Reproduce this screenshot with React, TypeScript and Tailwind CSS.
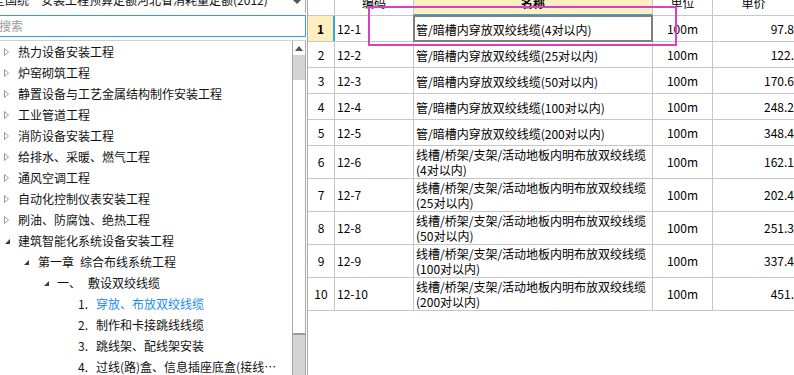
import React from 'react';

type TreeItem = { lvl: number; icon?: 'c' | 'e'; num?: string; text: string; sel?: boolean };

const tree: TreeItem[] = [
  { lvl: 0, icon: 'c', text: '热力设备安装工程' },
  { lvl: 0, icon: 'c', text: '炉窑砌筑工程' },
  { lvl: 0, icon: 'c', text: '静置设备与工艺金属结构制作安装工程' },
  { lvl: 0, icon: 'c', text: '工业管道工程' },
  { lvl: 0, icon: 'c', text: '消防设备安装工程' },
  { lvl: 0, icon: 'c', text: '给排水、采暖、燃气工程' },
  { lvl: 0, icon: 'c', text: '通风空调工程' },
  { lvl: 0, icon: 'c', text: '自动化控制仪表安装工程' },
  { lvl: 0, icon: 'c', text: '刷油、防腐蚀、绝热工程' },
  { lvl: 0, icon: 'e', text: '建筑智能化系统设备安装工程' },
  { lvl: 1, icon: 'e', num: '第一章', text: '综合布线系统工程' },
  { lvl: 2, icon: 'e', num: '一、', text: '敷设双绞线缆' },
  { lvl: 3, num: '1.', text: '穿放、布放双绞线缆', sel: true },
  { lvl: 3, num: '2.', text: '制作和卡接跳线线缆' },
  { lvl: 3, num: '3.', text: '跳线架、配线架安装' },
  { lvl: 3, num: '4.', text: '过线(路)盒、信息插座底盒(接线…' },
];

type Row = { n: number; code: string; name: string[]; price: string };

const rows: Row[] = [
  { n: 1, code: '12-1', name: ['管/暗槽内穿放双绞线缆(4对以内)'], price: '97.8' },
  { n: 2, code: '12-2', name: ['管/暗槽内穿放双绞线缆(25对以内)'], price: '122.' },
  { n: 3, code: '12-3', name: ['管/暗槽内穿放双绞线缆(50对以内)'], price: '170.6' },
  { n: 4, code: '12-4', name: ['管/暗槽内穿放双绞线缆(100对以内)'], price: '248.2' },
  { n: 5, code: '12-5', name: ['管/暗槽内穿放双绞线缆(200对以内)'], price: '348.4' },
  { n: 6, code: '12-6', name: ['线槽/桥架/支架/活动地板内明布放双绞线缆', '(4对以内)'], price: '162.1' },
  { n: 7, code: '12-7', name: ['线槽/桥架/支架/活动地板内明布放双绞线缆', '(25对以内)'], price: '202.4' },
  { n: 8, code: '12-8', name: ['线槽/桥架/支架/活动地板内明布放双绞线缆', '(50对以内)'], price: '251.3' },
  { n: 9, code: '12-9', name: ['线槽/桥架/支架/活动地板内明布放双绞线缆', '(100对以内)'], price: '337.4' },
  { n: 10, code: '12-10', name: ['线槽/桥架/支架/活动地板内明布放双绞线缆', '(200对以内)'], price: '451.' },
];

function Collapsed() {
  return (
    <svg width="5" height="8" viewBox="0 0 5 8">
      <path d="M0.5 0.5 L4.5 4 L0.5 7.5 Z" fill="none" stroke="#9a9a9a" strokeWidth="1" />
    </svg>
  );
}

function Expanded() {
  return (
    <svg width="5" height="5" viewBox="0 0 5 5">
      <path d="M5 0 L5 5 L0 5 Z" fill="#3a3a3a" />
    </svg>
  );
}

const lvlPad: Record<number, string> = {
  0: 'pl-[4px]',
  1: 'pl-[23px]',
  2: 'pl-[43px]',
  3: 'pl-[78px]',
};
const iconW: Record<number, string> = {
  0: 'w-[14px]',
  1: 'w-[15px]',
  2: 'w-[14px]',
  3: 'w-0',
};

function TreeRow({ item }: { item: TreeItem }) {
  return (
    <div className={`flex h-[21px] shrink-0 items-center whitespace-nowrap leading-[21px] ${lvlPad[item.lvl]}`}>
      {item.lvl < 3 && (
        <div className={`flex items-center ${iconW[item.lvl]} ${item.icon === 'e' ? 'pl-px pt-[1px]' : ''}`}>
          {item.icon === 'c' ? <Collapsed /> : <Expanded />}
        </div>
      )}
      {item.num && item.lvl === 3 && <span className="w-[18px] text-[#111]">{item.num}</span>}
      {item.num && item.lvl === 1 && <span className="mr-[6px] text-[#111]">{item.num}</span>}
      {item.num && item.lvl === 2 && <span className="mr-[7px] text-[#111]">{item.num}</span>}
      <span className={item.sel ? 'text-[#1a8cf0]' : 'text-[#111]'}>{item.text}</span>
    </div>
  );
}

function Header() {
  return (
    <div className="-mt-[10px] flex h-[26px] shrink-0 leading-[26px]">
      <div className="w-[27px] shrink-0 border-r border-b border-[#c6c6c6]" />
      <div className="w-[79px] shrink-0 border-r border-b border-[#c6c6c6] text-center">编码</div>
      <div className="w-[239px] shrink-0 border-r border-b-2 border-r-[#c6c6c6] border-b-[#33a6dd] bg-[#fdefc0] text-center font-bold">
        名称
      </div>
      <div className="w-[60px] shrink-0 border-r border-b border-[#c6c6c6] text-center">单位</div>
      <div className="min-w-0 flex-1 border-b border-[#c6c6c6] text-center">单价</div>
    </div>
  );
}

function DataRow({ r }: { r: Row }) {
  const tall = r.name.length > 1;
  const first = r.n === 1;
  return (
    <div className={`flex shrink-0 border-b border-[#c6c6c6] ${tall ? 'h-[33px]' : 'h-[26px]'}`}>
      <div
        className={`flex w-[27px] shrink-0 items-center justify-center ${
          first ? 'border-r-2 border-[#33a6dd] bg-[#fdefc0] font-bold' : 'border-r border-[#c6c6c6]'
        }`}
      >
        {r.n}
      </div>
      <div className="flex w-[79px] shrink-0 items-center border-r border-[#c6c6c6] pl-[2px]">{r.code}</div>
      <div className="relative flex w-[239px] shrink-0 flex-col justify-center overflow-visible border-r border-[#c6c6c6] pl-[2px] leading-[15px] whitespace-nowrap">
        {r.name.map((l, i) => (
          <div key={i} className={tall ? '' : 'pt-px'}>
            {l}
          </div>
        ))}
        {first && <div className="pointer-events-none absolute -top-px -right-px -bottom-px -left-px border-2 border-[#7f7f7f]" />}
      </div>
      <div className="flex w-[60px] shrink-0 items-center justify-center border-r border-[#c6c6c6]">100m</div>
      <div className="flex min-w-0 flex-1 items-center justify-end overflow-hidden whitespace-nowrap">{r.price}</div>
    </div>
  );
}

export default function App() {
  return (
    <div className="relative flex h-[375px] w-[794px] overflow-hidden bg-white font-['Noto_Sans_CJK_SC','Noto_Sans',sans-serif] text-[12px] text-black">
      {/* Left panel */}
      <div className="flex w-[306px] shrink-0 flex-col">
        {/* dropdown (scrolled partially out of view) */}
        <div className="relative flex h-[13px] shrink-0 border-r border-[#a8a8a8]">
          <div className="-mt-[7px] -ml-[7px] leading-[14px] whitespace-nowrap text-[#111]">
            全国统一安装工程预算定额河北省消耗量定额(2012)
          </div>
          <div className="absolute top-0 right-[4px]">
            <svg width="8" height="4" viewBox="0 0 8 4">
              <path d="M0 0 L8 0 L4 4 Z" fill="#555" />
            </svg>
          </div>
        </div>
        {/* search */}
        <div className="mt-[2px] -ml-px flex h-[22px] shrink-0 items-center border border-[#2e9fd9] bg-white">
          <span className="-ml-px text-[#9a9a9a]">搜索</span>
        </div>
        {/* tree */}
        <div className="mt-[3px] flex min-h-0 flex-1 border-t border-[#cfcfcf]">
          <div className="flex min-w-0 flex-1 flex-col overflow-hidden">
            {tree.map((t, i) => (
              <TreeRow key={i} item={t} />
            ))}
          </div>
          {/* scrollbar */}
          <div className="flex w-[14px] shrink-0 flex-col border-x border-[#a8a8a8]">
            <div className="flex h-[14px] shrink-0 items-center justify-center bg-white">
              <svg width="8" height="5" viewBox="0 0 8 5">
                <path d="M0 5 L4 0 L8 5 Z" fill="#555" />
              </svg>
            </div>
            <div className="h-[25px] shrink-0 bg-[#d4d4d4]" />
            <div className="h-[255px] shrink-0 border-b-2 border-[#9c9c9c] bg-white" />
            <div className="flex-1 bg-[#d4d4d4]" />
          </div>
        </div>
      </div>

      {/* Right panel: table */}
      <div className="ml-px flex min-w-0 flex-1 flex-col border-l border-[#a8a8a8]">
        <Header />
        {rows.map((r) => (
          <DataRow key={r.n} r={r} />
        ))}
      </div>

      {/* annotation box */}
      <div className="pointer-events-none absolute top-[6px] left-[368px] h-[40px] w-[309px] border-2 border-[#d641c9]" />
    </div>
  );
}
